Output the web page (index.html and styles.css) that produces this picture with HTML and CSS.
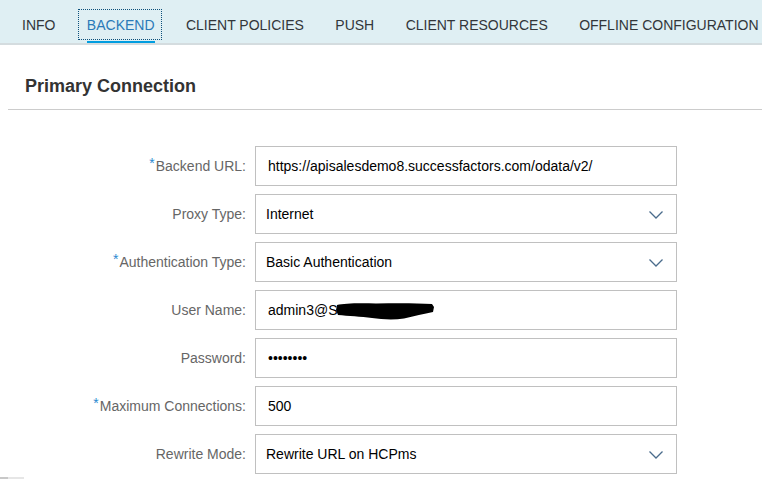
FILE: index.html
```html
<!DOCTYPE html>
<html>
<head>
<meta charset="utf-8">
<link rel="stylesheet" href="styles.css">
</head>
<body>
<nav class="tabbar">
  <div class="tab">INFO</div>
  <div class="tab selected"><span class="tab-label">BACKEND</span></div>
  <div class="tab">CLIENT POLICIES</div>
  <div class="tab">PUSH</div>
  <div class="tab">CLIENT RESOURCES</div>
  <div class="tab">OFFLINE CONFIGURATION</div>
</nav>
<section class="panel">
  <h2 class="panel-title">Primary Connection</h2>
</section>
<form class="form">
  <label class="label"><span class="req">*</span>Backend URL:</label>
  <div class="field">https://apisalesdemo8.successfactors.com/odata/v2/</div>

  <label class="label">Proxy Type:</label>
  <div class="field select"><span>Internet</span><svg class="chev" width="14" height="8" viewBox="0 0 14 8"><path d="M0.5 0.5 L7 7 L13.5 0.5" fill="none" stroke="#4a6c8c" stroke-width="1.3"/></svg></div>

  <label class="label"><span class="req">*</span>Authentication Type:</label>
  <div class="field select"><span>Basic Authentication</span><svg class="chev" width="14" height="8" viewBox="0 0 14 8"><path d="M0.5 0.5 L7 7 L13.5 0.5" fill="none" stroke="#4a6c8c" stroke-width="1.3"/></svg></div>

  <label class="label">User Name:</label>
  <div class="field"><span>admin3@S</span><svg class="blob" width="98" height="17" viewBox="0 0 98 17"><path d="M1 2 C8 0.5 20 0 40 0.5 C60 0 80 0 96 1 L98 4 L97 9 C88 11 78 13 68 15.5 C58 17 46 16.5 36 15 C25 13.5 12 13 2 12 L0 7 Z" fill="#000"/></svg></div>

  <label class="label">Password:</label>
  <div class="field">&bull;&bull;&bull;&bull;&bull;&bull;&bull;&bull;</div>

  <label class="label"><span class="req">*</span>Maximum Connections:</label>
  <div class="field">500</div>

  <label class="label">Rewrite Mode:</label>
  <div class="field select"><span>Rewrite URL on HCPms</span><svg class="chev" width="14" height="8" viewBox="0 0 14 8"><path d="M0.5 0.5 L7 7 L13.5 0.5" fill="none" stroke="#4a6c8c" stroke-width="1.3"/></svg></div>
</form>
<div class="hscroll"></div>
</body>
</html>
```

FILE: styles.css
```css
html, body {
  margin: 0;
  padding: 0;
  background: #ffffff;
  font-family: "Liberation Sans", Arial, sans-serif;
  overflow: hidden;
}

.tabbar {
  display: flex;
  height: 43px;
  padding-left: 6px;
  background: #dfeff3;
  border-bottom: 2px solid #d4dcdf;
  white-space: nowrap;
  overflow: hidden;
}

.tab {
  position: relative;
  padding: 7px 15.4px 0 16px;
  line-height: 36px;
  font-size: 14px;
  color: #32363a;
  flex: none;
}

.tab.selected {
  color: #2a7ab8;
}

.tab.selected::after {
  content: "";
  position: absolute;
  left: 16px;
  right: 15.4px;
  bottom: -2px;
  height: 4px;
  background: #009de0;
}

.tab-label {
  position: relative;
}

.tab-label::before {
  content: "";
  position: absolute;
  left: -9px;
  right: -7px;
  top: -8px;
  height: 29px;
  border: 1px dotted #0b4f7a;
}

.panel {
  margin-left: 8px;
  padding: 30px 0 12px 17px;
  border-bottom: 1px solid #cccccc;
}

.panel-title {
  margin: 0;
  font-size: 18px;
  line-height: 22px;
  font-weight: bold;
  color: #333333;
}

.form {
  display: grid;
  grid-template-columns: 246px 422px;
  column-gap: 9px;
  row-gap: 8px;
  margin: 36px 0 0 0;
}

.label {
  display: flex;
  align-items: center;
  justify-content: flex-end;
  font-size: 14px;
  color: #666666;
}

.req {
  color: #2b8ad0;
  font-size: 14px;
  position: relative;
  top: -3px;
  margin-right: 1px;
}

.field {
  box-sizing: border-box;
  height: 40px;
  display: flex;
  align-items: center;
  padding-left: 12px;
  border: 1px solid #c0c0c0;
  font-size: 14px;
  color: #000000;
  background: #ffffff;
}

.field.select {
  padding-left: 10px;
  padding-right: 13px;
  justify-content: space-between;
}

.chev {
  display: block;
  margin-top: 1px;
}

.blob {
  display: block;
  margin-left: -1px;
  margin-top: 3px;
}

.hscroll {
  position: fixed;
  left: 0;
  bottom: 0;
  width: 24px;
  height: 2px;
  background: linear-gradient(to right, #c8c8c8 0 8px, #e6e6e6 8px 24px);
}
```
